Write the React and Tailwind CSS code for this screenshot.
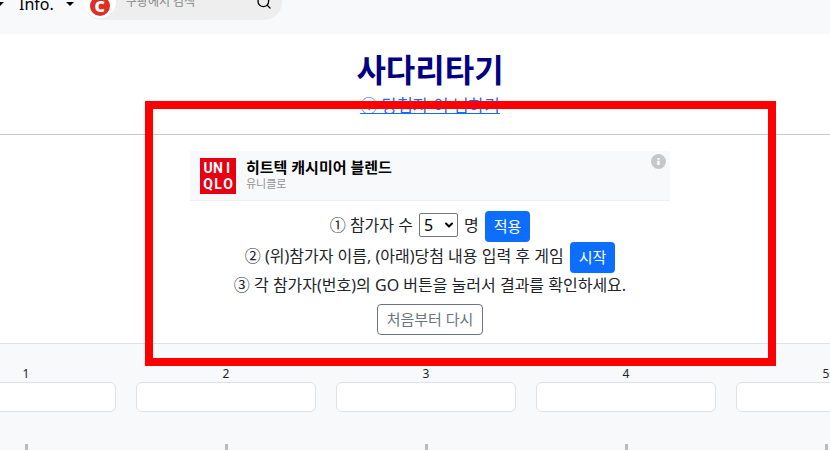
import React, { useState } from 'react'
import { ChevronDown, Search } from 'lucide-react'

const columns = [1, 2, 3, 4, 5]

function Caret() {
  return (
    <svg className="w-2 h-1" viewBox="0 0 8 4">
      <path d="M0 0h8L4 4z" fill="currentColor" />
    </svg>
  )
}

function InfoIcon() {
  return (
    <svg className="w-[15px] h-[15px]" viewBox="0 0 15 15">
      <circle cx="7.5" cy="7.5" r="7.5" fill="#c6c7c9" />
      <path d="M6.4 4h2.2v1.8H6.4zM6.2 6.8h2.4V11H6.2z" fill="#fff" />
    </svg>
  )
}

export default function App() {
  const [count, setCount] = useState('5')

  return (
    <div className="relative h-screen overflow-hidden bg-white text-[#212529] font-['Noto_Sans','Noto_Sans_CJK_KR',sans-serif]">
      {/* Top navigation */}
      <header className="flex h-[34px] items-end bg-[#f8f9fa] pb-[14px]">
        <nav className="flex h-8 items-center text-base leading-4 text-black">
          <a href="#menu" aria-label="Menu" className="-ml-1 w-[23px]"><Caret /></a>
          <a href="#info" className="flex items-center gap-3">
            Info. <Caret />
          </a>
        </nav>
        <form className="ml-[10px] flex h-9 w-[198px] shrink-0 items-center rounded-full bg-[#eee]">
          <span className="flex h-8 w-8 items-end justify-center rounded-full bg-white pb-[2px]">
            <span className="flex h-5 w-5 items-center justify-center rounded-full bg-[#dc2f26] font-['Open_Sans',sans-serif] text-base leading-5 font-extrabold text-white">
              C
            </span>
          </span>
          <input
            aria-label="쿠팡에서 검색"
            placeholder="쿠팡에서 검색"
            className="ml-[10px] w-[130px] bg-transparent text-xs placeholder:text-[#888]"
          />
          <button type="button" aria-label="검색" className="text-black"><Search size={16} /></button>
        </form>
      </header>

      {/* Title */}
      <div className="flex flex-col items-center border-b border-[#c8c8c8] pt-4 pb-4 pl-[30px] text-center">
        <h1 className="text-[32px] leading-10 font-bold text-[#000080]">사다리타기</h1>
        <a href="#winner" className="mt-1 text-[17px] leading-6 text-[#0d6efd] underline">① 당첨자 이 님하기</a>
      </div>

      {/* Ad and instructions */}
      <main className="flex flex-col items-center border-b border-[#dee2e6] pt-4 pb-2 pl-[30px]">
        <section className="flex h-[50px] w-[480px] border-b border-[#eceef0] bg-[#f8f9fb] py-[7px] pr-1 pl-[10px]">
          <div className="grid h-9 w-9 grid-cols-3 content-center justify-items-center bg-[#e60012] px-[3px] font-['Roboto',sans-serif] text-sm leading-4 font-bold text-white">
            {['U', 'N', 'I', 'Q', 'L', 'O'].map((letter) => <span key={letter}>{letter}</span>)}
          </div>
          <div className="ml-[10px] flex-1">
            <p className="text-[15px] leading-[18px] font-bold text-black">히트텍 캐시미어 블렌드</p>
            <p className="text-[11px] leading-4 text-[#929292]">유니클로</p>
          </div>
          <button aria-label="광고 정보" className="-mt-1 self-start"><InfoIcon /></button>
        </section>

        <div className="flex items-center gap-[6px] pt-[10px] text-base">
          <label htmlFor="count" className="pb-1">① 참가자 수</label>
          <div className="relative pb-1">
            <select
              id="count"
              value={count}
              onChange={(e) => setCount(e.target.value)}
              className="block h-6 w-[39px] appearance-none rounded-[2px] border border-[#767676] bg-white pl-1 text-base leading-5 text-black"
            >
              {columns.map((n) => <option key={n}>{n}</option>)}
            </select>
            <ChevronDown size={12} strokeWidth={4} className="pointer-events-none absolute top-[6px] right-[3px] text-black" />
          </div>
          <span className="pb-1">명</span>
          <button className="h-[31px] rounded bg-[#0d6efd] px-[9px] text-[15px] text-white">적용</button>
        </div>
        <div className="flex items-center gap-[6px] text-base">
          <p className="pb-1">② (위)참가자 이름, (아래)당첨 내용 입력 후 게임</p>
          <button className="h-[31px] rounded bg-[#0d6efd] px-[9px] text-[15px] text-white">시작</button>
        </div>
        <p className="text-base leading-6">③ 각 참가자(번호)의 GO 버튼을 눌러서 결과를 확인하세요.</p>
        <button className="mt-[7px] h-[31px] rounded border border-[#6c757d] px-[9px] text-[15px] text-[#6c757d]">처음부터 다시</button>
      </main>

      {/* Ladder columns */}
      <section className="-ml-[74px] flex bg-[#f8f9fa] pt-[21px]">
        {columns.map((n) => (
          <div key={n} className="flex w-[200px] shrink-0 flex-col items-center px-[10px]">
            <label htmlFor={`player-${n}`} className="text-xs leading-[17px]">{n}</label>
            <input id={`player-${n}`} className="h-[30px] w-full rounded-md border border-[#dee2e6] bg-white px-2 text-sm" />
            <div className="mt-8 h-10 w-[3px] bg-[#bbb]" />
          </div>
        ))}
      </section>

      {/* Highlighted area */}
      <div className="pointer-events-none absolute top-[101px] left-[145px] h-[265px] w-[631px] border-8 border-[#f00]" />
    </div>
  )
}
